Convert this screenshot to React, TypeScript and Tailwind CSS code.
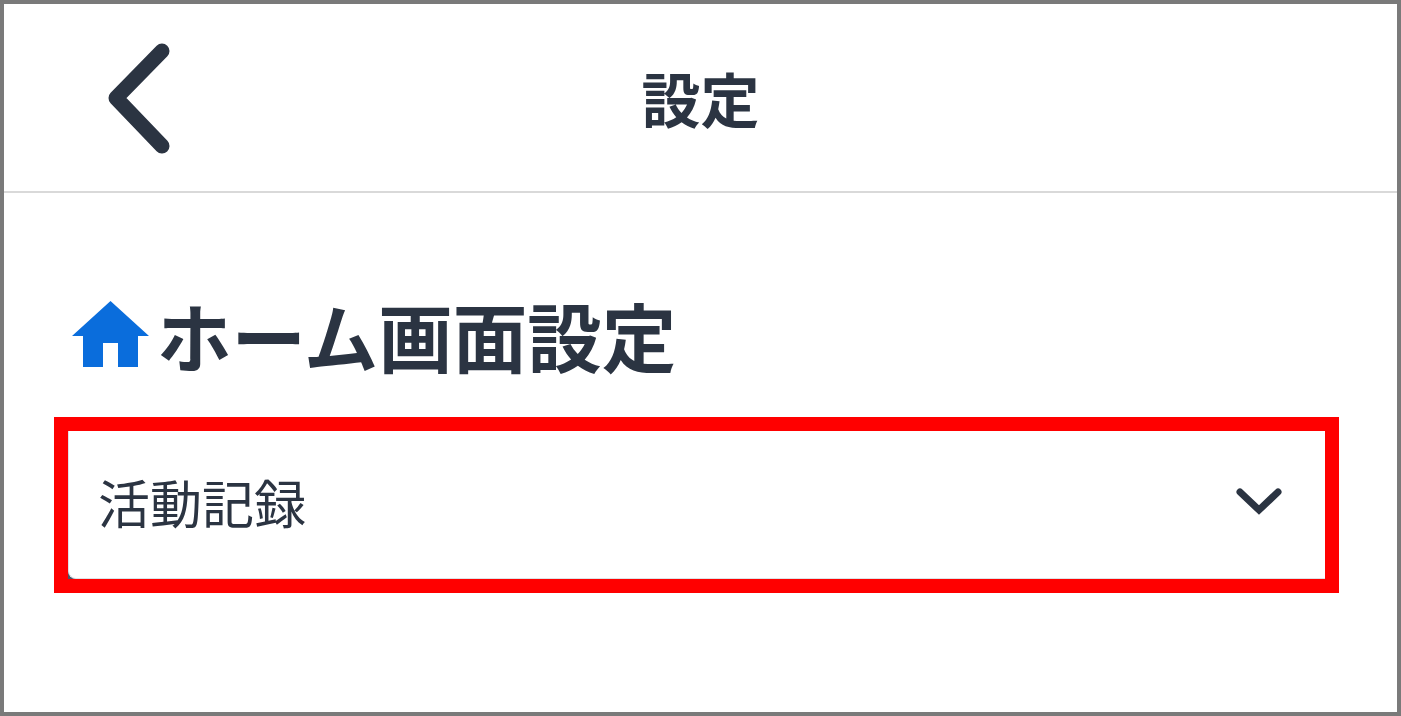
import React from 'react';

const font = { fontFamily: '"Noto Sans CJK JP", "Noto Sans", sans-serif' };

const App: React.FC = () => {
  return (
    <div
      className="w-[1401px] h-[716px] overflow-hidden bg-white border-4 border-[#7a7a7a] text-[#2b3442]"
      style={font}
    >
      <header className="h-[189px] grid grid-cols-3 items-center border-b-2 border-[#d9d9d9]">
        <button className="pl-[96px] flex items-center">
          <svg width="78" height="116" viewBox="0 0 78 116" fill="none" stroke="#2b3442" strokeWidth="15" strokeLinecap="round" strokeLinejoin="round">
            <path d="M62 11 L16 58 L62 106" />
          </svg>
        </button>
        <h1 className="text-center text-[59px] leading-none font-bold">設定</h1>
        <div />
      </header>

      <main className="pt-[102px] pl-[50px] pr-[54px]">
        <div className="flex items-center h-[80px] pl-[18px]">
          <svg width="78" height="68" viewBox="0 0 78 68" className="shrink-0">
            <path fill="#0a6ddc" d="M38.5 0 L77 35 L66 35 L66 66 L46 66 L46 42 L31 42 L31 66 L11 66 L11 35 L0 35 Z" />
          </svg>
          <h2 className="ml-[7px] text-[74.5px] leading-none font-bold whitespace-nowrap">ホーム画面設定</h2>
        </div>

        <div className="mt-[42px] h-[176px] w-[1285px] border-[14px] border-[#ff0000] bg-[#4a5568]">
          <div className="h-full bg-white rounded-bl-[8px] border-l border-b border-[#dde1e6] flex items-center justify-between pl-[29px] pr-[42px] pb-[6px]">
            <span className="text-[52px] leading-none">活動記録</span>
            <svg width="48" height="32" viewBox="0 0 48 32" fill="none" stroke="#2b3442" strokeWidth="7" strokeLinejoin="miter" strokeLinecap="round">
              <path d="M5 6 L24 24 L43 6" />
            </svg>
          </div>
        </div>
      </main>
    </div>
  );
};

export default App;
